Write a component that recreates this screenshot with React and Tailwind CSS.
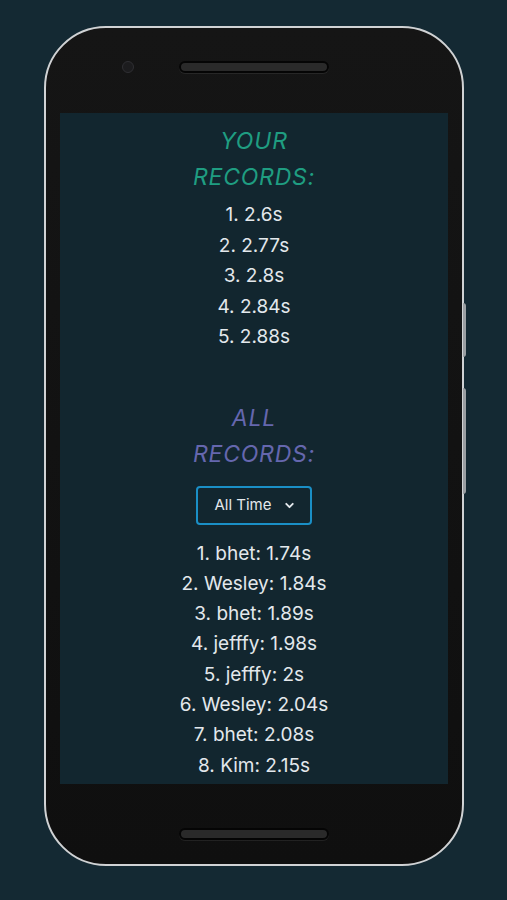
import { ChevronDown } from 'lucide-react';

const yourRecords = ['2.6s', '2.77s', '2.8s', '2.84s', '2.88s'];

const allRecords = [
  ['bhet', '1.74s'],
  ['Wesley', '1.84s'],
  ['bhet', '1.89s'],
  ['jefffy', '1.98s'],
  ['jefffy', '2s'],
  ['Wesley', '2.04s'],
  ['bhet', '2.08s'],
  ['Kim', '2.15s'],
];

function Speaker() {
  return (
    <div className="w-[150px] h-[12px] rounded-full bg-[#2a2a2a] border-2 border-[#050505] shadow-[0_1px_0_rgba(255,255,255,0.08)]" />
  );
}

export default function App() {
  return (
    <div
      className="min-h-[900px] w-full bg-[#142933] pt-[26px] pl-[44px]"
      style={{ fontFamily: 'Inter, "Noto Sans", sans-serif' }}
    >
      <div className="relative w-[420px] h-[840px] rounded-[62px] border-2 border-[#d0d2d4] bg-gradient-to-b from-[#151515] to-[#0f0f0f] flex flex-col">
        {/* side buttons */}
        <div className="absolute -right-[4px] top-[275px] w-[3px] h-[54px] rounded-r bg-[#9a9ea2]" />
        <div className="absolute -right-[4px] top-[360px] w-[3px] h-[106px] rounded-r bg-[#9a9ea2]" />

        <div className="relative h-[85px] flex justify-center pt-[33px]">
          <div className="absolute left-[76px] top-[33px] w-[12px] h-[12px] rounded-full bg-[#1c1c1e] border border-[#2f2f33]" />
          <Speaker />
        </div>

        <div className="mx-[14px] h-[671px] bg-[#12262f] overflow-hidden flex flex-col items-center pt-[10px]">
          <div className="text-[23px] leading-[36px] italic font-normal tracking-[0.8px] text-[#1f9d81] text-center">
            <div>YOUR</div>
            <div>RECORDS:</div>
          </div>
          <div className="mt-[5px] text-[19px] leading-[30.5px] text-[#e3e8ec] text-center">
            {yourRecords.map((r, i) => (
              <div key={i}>{i + 1}. {r}</div>
            ))}
          </div>

          <div className="mt-[47px] text-[23px] leading-[36px] italic font-normal tracking-[0.8px] text-[#6567ae] text-center">
            <div>ALL</div>
            <div>RECORDS:</div>
          </div>

          <button className="mt-[14px] w-[116px] h-[39px] rounded-[4px] border-2 border-[#1a8fc6] flex items-center justify-center gap-[11px] pl-[2px] text-[15px] text-[#e3e8ec]">
            <span>All Time</span>
            <ChevronDown className="w-[13px] h-[13px]" strokeWidth={3.5} />
          </button>

          <div className="mt-[14px] text-[19px] leading-[30.3px] text-[#e3e8ec] text-center">
            {allRecords.map(([name, t], i) => (
              <div key={i}>{i + 1}. {name}: {t}</div>
            ))}
          </div>
        </div>

        <div className="flex-1 flex justify-center pt-[44px]">
          <Speaker />
        </div>
      </div>
    </div>
  );
}
